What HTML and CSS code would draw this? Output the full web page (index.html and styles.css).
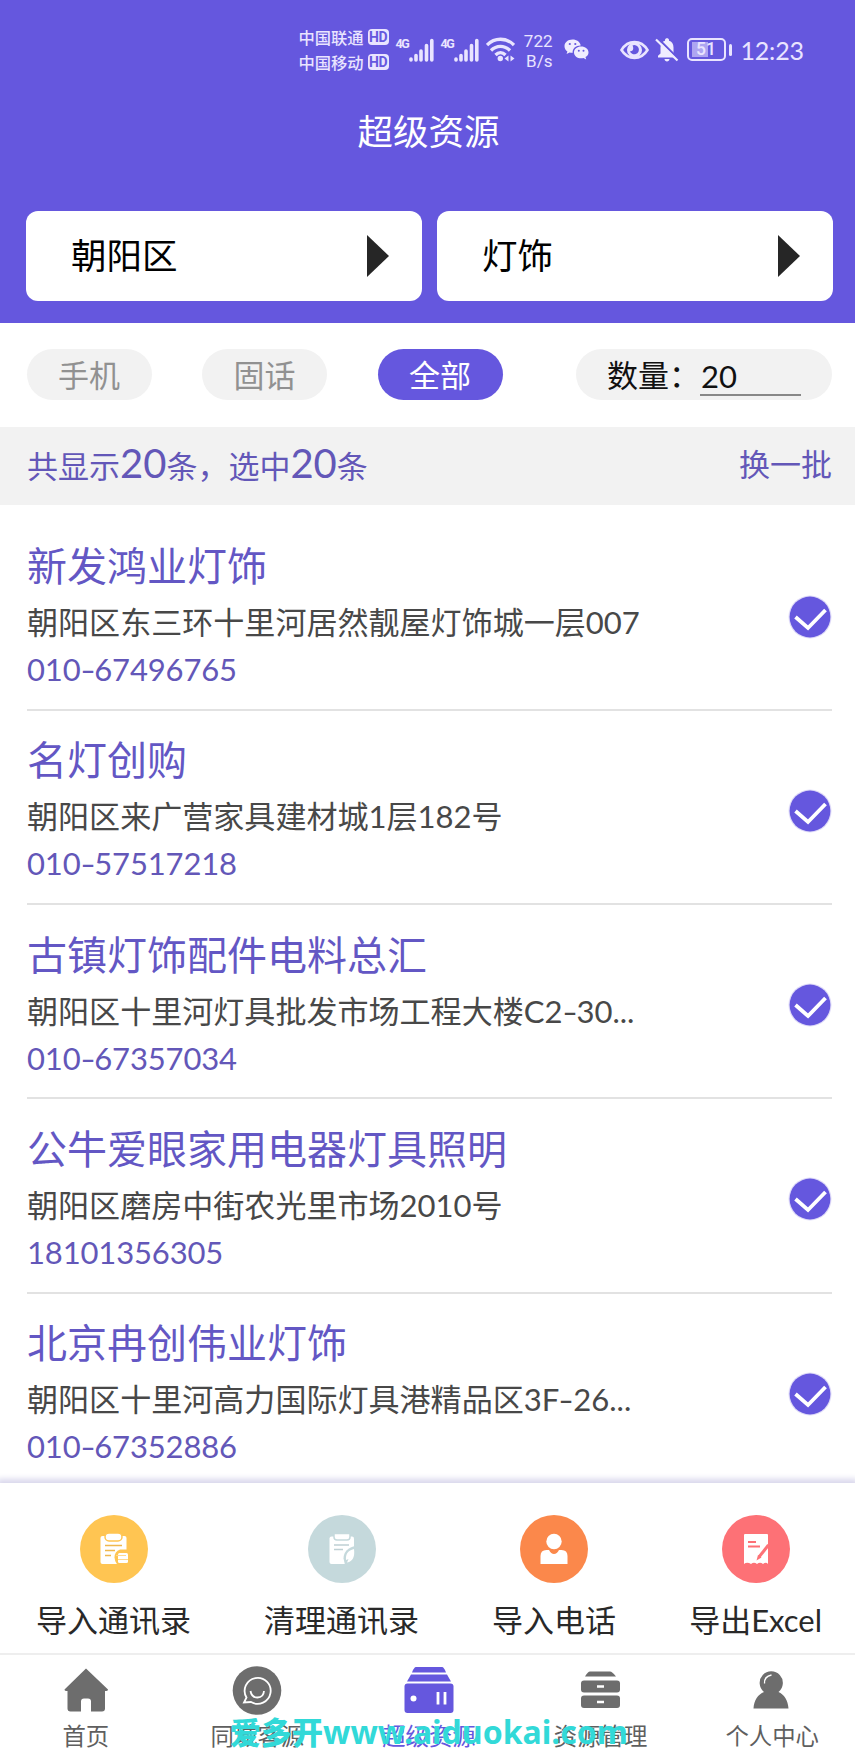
FILE: index.html
```html
<!DOCTYPE html>
<html lang="zh-CN">
<head>
<meta charset="utf-8">
<title>超级资源</title>
<link rel="stylesheet" href="styles.css">
</head>
<body>
<div class="app">
  <header class="header">
    <div class="status">
      <div class="carriers">
        <div class="carrier">中国联通<span class="hd">HD</span></div>
        <div class="carrier">中国移动<span class="hd">HD</span></div>
      </div>
      <div class="signal"><span class="net">4G</span>
        <svg width="25" height="24" viewBox="0 0 25 24"><path d="M2 21v1M7 17.500v4.500M12 13v9M17.500 7.500v14.500M22.800 2.500v19.500" stroke="#e9e4ff" stroke-width="3.600" stroke-linecap="round"/></svg>
      </div>
      <div class="signal"><span class="net">4G</span>
        <svg width="25" height="24" viewBox="0 0 25 24"><path d="M2 21v1M7 17.500v4.500M12 13v9M17.500 7.500v14.500M22.800 2.500v19.500" stroke="#e9e4ff" stroke-width="3.600" stroke-linecap="round"/></svg>
      </div>
      <svg class="wifi" width="29" height="25" viewBox="0 0 29 25" fill="none" stroke="#e9e4ff" stroke-width="3.300"><path d="M1 8C8.500.3 20.500.3 28 8M5 13.500c5.500-5.500 13.500-5.500 19 0M9.500 18c3-3 7-3 10 0"/><circle cx="14.300" cy="21.500" r="2.700" fill="#e9e4ff" stroke="none"/><path d="M22.500 18.500v6l-4-3zM24.500 18.500v6l4-3z" fill="#e9e4ff" stroke="none"/></svg>
      <div class="speed"><span>722</span><span>B/s</span></div>
      <svg class="wechat" width="25" height="21" viewBox="0 0 25 21"><path fill="#f0edff" d="M8.500.5C3.900.5.500 3.400.500 7.200c0 2.200 1.100 4 2.900 5.200l-.8 2.500 3-1.500c1 .3 2 .5 3.100.4-.5-4.300 3-7.400 8-7.400C16 2.700 12.800.5 8.500.5z"/><path fill="#f0edff" d="M17.200 7.500c-4 0-7.200 2.600-7.200 5.900s3.200 5.900 7.200 5.900c.8 0 1.600-.1 2.300-.3l2.700 1.400-.7-2.300c1.800-1.100 3-2.800 3-4.700 0-3.300-3.300-5.900-7.300-5.900z"/><g fill="#6557de"><circle cx="5.800" cy="5" r="1.100"/><circle cx="11.300" cy="5" r="1.100"/><circle cx="14.800" cy="11.700" r="1"/><circle cx="19.500" cy="11.700" r="1"/></g></svg>
      <svg class="eye" width="29" height="20" viewBox="0 0 29 20"><path d="M1.500 10C8-.500 21-.500 27.500 10 21 20.500 8 20.500 1.500 10z" fill="none" stroke="#e9e4ff" stroke-width="2.600"/><circle cx="14.500" cy="10" r="7.500" fill="#e9e4ff"/><path d="M12.500 5.500a4.600 4.600 0 1 1-2.600 5.500c2.500 1 4.500-2 2.600-5.500z" fill="#6557de"/></svg>
      <svg class="bell" width="24" height="24" viewBox="0 0 24 24"><path d="M3 19.500v-1.700l2.500-2.300V9.500c0-3.500 1.900-6 4.500-6.700V2c0-2.300 4-2.300 4 0v.8c2.800.7 4.500 3.200 4.500 6.700v6l2.500 2.300v1.700zM9.500 21h5c0 3.300-5 3.300-5 0z" fill="#f0edff"/><path d="M3 .5l20 20" stroke="#6557de" stroke-width="2.200"/><path d="M1 1.500l21.500 21" stroke="#f0edff" stroke-width="2.200"/></svg>
      <div class="battery"><span class="cell">51</span><i class="tip"></i></div>
      <div class="clock">12:23</div>
    </div>
    <h1 class="title">超级资源</h1>
    <div class="selects">
      <div class="select"><span>朝阳区</span><i class="arrow"></i></div>
      <div class="select"><span>灯饰</span><i class="arrow"></i></div>
    </div>
  </header>

  <div class="filters">
    <div class="pill">手机</div>
    <div class="pill">固话</div>
    <div class="pill active">全部</div>
    <div class="quantity"><span class="qlabel">数量：</span><span class="qvalue">20</span></div>
  </div>

  <div class="summary">
    <div class="counts">共显示<b>20</b>条，选中<b>20</b>条</div>
    <div class="refresh">换一批</div>
  </div>

  <main class="list">
    <article class="item"><div class="info"><h2>新发鸿业灯饰</h2><p>朝阳区东三环十里河居然靓屋灯饰城一层007</p><div class="phone">010<i>-</i>67496765</div></div>
      <svg class="check" width="44" height="44" viewBox="0 0 44 44"><circle cx="22" cy="22" r="21.500" fill="#dedaf8"/><circle cx="22" cy="22" r="20.400" fill="#6557de"/><path d="M7.500 22l12.500 11L37.500 15" fill="none" stroke="#fff" stroke-width="3.800"/></svg></article>
    <article class="item"><div class="info"><h2>名灯创购</h2><p>朝阳区来广营家具建材城1层182号</p><div class="phone">010<i>-</i>57517218</div></div>
      <svg class="check" width="44" height="44" viewBox="0 0 44 44"><circle cx="22" cy="22" r="21.500" fill="#dedaf8"/><circle cx="22" cy="22" r="20.400" fill="#6557de"/><path d="M7.500 22l12.500 11L37.500 15" fill="none" stroke="#fff" stroke-width="3.800"/></svg></article>
    <article class="item"><div class="info"><h2>古镇灯饰配件电料总汇</h2><p>朝阳区十里河灯具批发市场工程大楼C2<i>-</i>30...</p><div class="phone">010<i>-</i>67357034</div></div>
      <svg class="check" width="44" height="44" viewBox="0 0 44 44"><circle cx="22" cy="22" r="21.500" fill="#dedaf8"/><circle cx="22" cy="22" r="20.400" fill="#6557de"/><path d="M7.500 22l12.500 11L37.500 15" fill="none" stroke="#fff" stroke-width="3.800"/></svg></article>
    <article class="item"><div class="info"><h2>公牛爱眼家用电器灯具照明</h2><p>朝阳区磨房中街农光里市场2010号</p><div class="phone">18101356305</div></div>
      <svg class="check" width="44" height="44" viewBox="0 0 44 44"><circle cx="22" cy="22" r="21.500" fill="#dedaf8"/><circle cx="22" cy="22" r="20.400" fill="#6557de"/><path d="M7.500 22l12.500 11L37.500 15" fill="none" stroke="#fff" stroke-width="3.800"/></svg></article>
    <article class="item"><div class="info"><h2>北京冉创伟业灯饰</h2><p>朝阳区十里河高力国际灯具港精品区3F<i>-</i>26...</p><div class="phone">010<i>-</i>67352886</div></div>
      <svg class="check" width="44" height="44" viewBox="0 0 44 44"><circle cx="22" cy="22" r="21.500" fill="#dedaf8"/><circle cx="22" cy="22" r="20.400" fill="#6557de"/><path d="M7.500 22l12.500 11L37.500 15" fill="none" stroke="#fff" stroke-width="3.800"/></svg></article>
  </main>

  <section class="actions">
    <div class="action">
      <svg width="68" height="68" viewBox="0 0 68 68"><circle cx="34" cy="34" r="34" fill="#ffc552"/><rect x="20.500" y="21" width="26" height="28" rx="2" fill="#fff"/><rect x="25" y="18" width="17" height="8" rx="4" fill="#fff" stroke="#ffc552" stroke-width="1.500"/><path d="M25 30.500h17M25 35.500h10M25 40.500h6" stroke="#efb84e" stroke-width="1.700"/><path d="M48 34.500h-8q-5.500 2-5.500 8 0 4 3 7.500H48z" fill="#ffc552"/><rect x="38" y="38" width="10" height="10" rx="1.500" fill="#fff"/><path d="M36 40.500h10M38 44.500h10" stroke="#ffd98e" stroke-width="1.100"/></svg>
      <span>导入通讯录</span></div>
    <div class="action">
      <svg width="68" height="68" viewBox="0 0 68 68"><circle cx="34" cy="34" r="34" fill="#c5d9dc"/><rect x="21.500" y="21.500" width="24.500" height="27.500" rx="2" fill="#fff"/><path d="M26 18.500h16v3.500q0 3-3 3H29q-3 0-3-3z" fill="#fff" stroke="#c5d9dc" stroke-width="1.500"/><path d="M26 30h15M26 34.500h9" stroke="#bfd0d4" stroke-width="1.700"/><path d="M48 31c-8 1-12.500 6-12.500 12.500L37 50h11z" fill="#c5d9dc"/><path d="M46 34c-6 1.500-8.500 5-8 11l2.500-1-1.500 3.500c6-1 8-6 7-13.500z" fill="#fff"/></svg>
      <span>清理通讯录</span></div>
    <div class="action">
      <svg width="68" height="68" viewBox="0 0 68 68"><circle cx="34" cy="34" r="34" fill="#fb884b"/><circle cx="34" cy="26.500" r="7.700" fill="#fff"/><path d="M20.500 49V41q0-6 6-6h2.500q2 4 5 4t5-4h2.500q6 0 6 6v8z" fill="#fff"/></svg>
      <span>导入电话</span></div>
    <div class="action">
      <svg width="68" height="68" viewBox="0 0 68 68"><circle cx="34" cy="34" r="34" fill="#fd7176"/><path d="M22 20q0-1 1-1h22q1 0 1 1v29q-2-2.500-5 0-3-2.500-6 0-3-2.500-6 0-4-2.500-7 0z" fill="#fff"/><path d="M26 27h8M26 31.500h12" stroke="#fd7176" stroke-width="1.800"/><path d="M46.500 30L37 42" stroke="#fd7176" stroke-width="3"/><path d="M36 40l3.500 2.500-5 3z" fill="#fd7176"/></svg>
      <span>导出Excel</span></div>
  </section>

  <nav class="tabs">
    <div class="tab"><svg width="50" height="50" viewBox="0 0 50 50"><path d="M25 2.500L3.500 23.500q0 1.500 3 1.500V42.500q0 3 3 3H20V35.500q0-3 3-3h4q3 0 3 3v10h11q3 0 3-3V25q3 0 3-1.500z" fill="#6d6d6d"/></svg><span>首页</span></div>
    <div class="tab"><svg width="50" height="50" viewBox="0 0 50 50"><circle cx="25" cy="24.500" r="24.300" fill="#6d6d6d"/><path d="M14.500 31.500A13 13 0 1 1 19 36L12 36.500z" fill="none" stroke="#fff" stroke-width="1.800"/><path d="M18.500 25q1 6.500 7 6.500t6.500-6.500" fill="none" stroke="#fff" stroke-width="1.800"/></svg><span>同城客源</span></div>
    <div class="tab current"><svg width="50" height="50" viewBox="0 0 50 50"><g fill="#6557de"><path d="M12 1h26q2 0 4 5.500H8Q10 1 12 1zM7 8.500h36l4 7H3z"/><path d="M3.500 17.500h43q3 0 3 3V44q0 3-3 3h-43q-3 0-3-3V20.500q0-3 3-3z"/></g><circle cx="9.500" cy="32.500" r="3" fill="#fff"/><path d="M34 26v12.500M41 26v12.500" stroke="#fff" stroke-width="2.800"/></svg><span>超级资源</span></div>
    <div class="tab"><svg width="50" height="50" viewBox="0 0 50 50"><g fill="#6d6d6d"><path d="M14 5.500h20q2 0 6 5H9q3-5 5-5z"/><rect x="5" y="14.500" width="39" height="12" rx="3"/><rect x="5" y="29.500" width="39" height="12.500" rx="3"/></g><path d="M21 20.500h7M21 36h7" stroke="#fff" stroke-width="2.500"/></svg><span>资源管理</span></div>
    <div class="tab"><svg width="50" height="50" viewBox="0 0 50 50"><path d="M17 26a11.600 11.600 0 1 1 14.500 0C37 28.500 41 34 41.500 42.500h-35C7 34 11 28.500 17 26z" fill="#6d6d6d"/><path d="M17.500 17.500q-.500-7 7-8.500" fill="none" stroke="#fff" stroke-width="1.300"/></svg><span>个人中心</span></div>
  </nav>
  <div class="watermark">爱多开<span>www.aiduokai.com</span></div>
</div>
</body>
</html>
```
FILE: styles.css
```css
* { box-sizing: border-box; margin: 0; padding: 0; }
body { font-family: Lato, "Noto Sans CJK SC", sans-serif; background: #fff; }
svg { display: block; flex: none; }
.app { width: 855px; height: 1764px; position: relative; display: flex; flex-direction: column; overflow: hidden; }

.header { height: 323px; flex: none; background: #6557de; color: #fff; }
.status { height: 99px; padding-left: 298.500px; display: flex; align-items: center; color: #e9e4ff; }
.carriers { width: 90px; }
.carrier { height: 25px; display: flex; align-items: center; justify-content: space-between; font-size: 16.300px; white-space: nowrap; font-weight: 500; }
.hd { width: 21px; height: 16px; border-radius: 4px; background: #e9e4ff; color: #6557de; font: bold 14px/16px Roboto, sans-serif; text-align: center; letter-spacing: -.5px; }
.signal { display: flex; align-items: flex-start; margin-left: 7px; width: 38px; }
.net { width: 13px; font: bold 12.500px/12px Roboto, sans-serif; letter-spacing: -1.300px; }
.wifi { margin-left: 7px; }
.speed { width: 30px; margin-left: 8px; display: flex; flex-direction: column; text-align: right; font: 17px/20px Roboto, sans-serif; padding-top: 3px; }
.wechat { margin-left: 11px; }
.eye { margin-left: 31px; }
.bell { margin-left: 6px; }
.battery { margin-left: 8px; display: flex; align-items: center; gap: 3px; }
.cell { width: 39px; height: 23px; border: 2px solid #e9e4ff; border-radius: 5px; font: 500 17.500px/19px Roboto, sans-serif; text-align: center; background: linear-gradient(#aea5f1, #aea5f1) 3px 2px / 16px 15px no-repeat; }
.tip { width: 3px; height: 12px; border-radius: 2px; background: #e9e4ff; }
.clock { margin-left: 9px; font-size: 25px; line-height: 30px; letter-spacing: -.2px; }
.title { height: 66px; line-height: 66px; text-align: center; font-size: 35.500px; font-weight: 400; padding-left: 2px; }
.selects { display: flex; gap: 15px; padding: 46px 21px 0 26px; }
.select { width: 396px; height: 90px; border-radius: 12px; background: #fff; color: #000; display: flex; align-items: center; justify-content: space-between; padding: 0 33px 0 45px; font-size: 35.500px; line-height: 50px; }
.arrow { border-left: 22px solid #262626; border-top: 21px solid transparent; border-bottom: 21px solid transparent; }

.filters { height: 104px; flex: none; display: flex; align-items: center; padding: 0 23px 1px 26.500px; }
.pill { width: 125px; height: 51px; border-radius: 26px; margin-right: 50.500px; background: #f2f2f2; color: #919191; font-size: 31px; line-height: 53px; text-align: center; }
.pill.active { background: #6557de; color: #fff; }
.quantity { width: 256px; height: 51px; margin-left: auto; border-radius: 26px; background: #f2f2f2; display: flex; padding-left: 31px; font-size: 31px; color: #111; }
.qlabel { width: 93px; line-height: 53px; }
.qvalue { width: 101px; height: 47px; line-height: 54px; padding-left: 1px; border-bottom: 2px solid #888; }

.summary { height: 78px; flex: none; background: #f2f2f2; color: #6357b8; display: flex; justify-content: space-between; padding: 0 23px 0 27px; font-size: 31px; line-height: 74px; }
.counts { padding-top: 2px; }
.counts b { font-size: 40px; font-weight: 400; line-height: 1; }

.list { height: 971px; flex: none; padding: 11.500px 23px 0 27px; overflow: hidden; }
.item { height: 194.300px; display: flex; align-items: flex-start; justify-content: space-between; border-bottom: 2px solid #e2e2e2; }
.info { padding-top: 21.500px; }
.item h2 { font-size: 40px; line-height: 56px; font-weight: 400; color: #6357c4; }
.item p { font-size: 31.050px; line-height: 56px; color: #484848; white-space: nowrap; }
.phone { font-size: 31px; line-height: 38px; color: #6357b8; letter-spacing: -.15px; }
.info i { display: inline-block; font-style: normal; transform: scaleX(1.350); padding: 0 1.200px; }
.check { margin-top: 78px; }

.actions { height: 170px; flex: none; position: relative; background: #fff; box-shadow: 0 -1px 6px 3px #d9d7ec; margin-top: 7px; display: flex; justify-content: space-between; align-items: flex-start; padding: 32px 33px 0 36px; }
.action { display: flex; flex-direction: column; align-items: center; gap: 13px; font-size: 31px; line-height: 48px; color: #292929; }

.tabs { height: 111px; flex: none; position: relative; background: #fff; border-top: 2px solid #eee; display: flex; padding-top: 11px; }
.tab { flex: none; width: 171.600px; display: flex; flex-direction: column; align-items: center; font-size: 23.400px; line-height: 40px; color: #5f5f5f; }
.tab.current { color: #6557de; }
.watermark { position: absolute; left: 230px; top: 1711px; color: #32d9d8; font-size: 31px; font-weight: 900; line-height: 42px; white-space: nowrap; }
.watermark span { font: 700 32px/42px "Noto Sans", sans-serif; }
```
